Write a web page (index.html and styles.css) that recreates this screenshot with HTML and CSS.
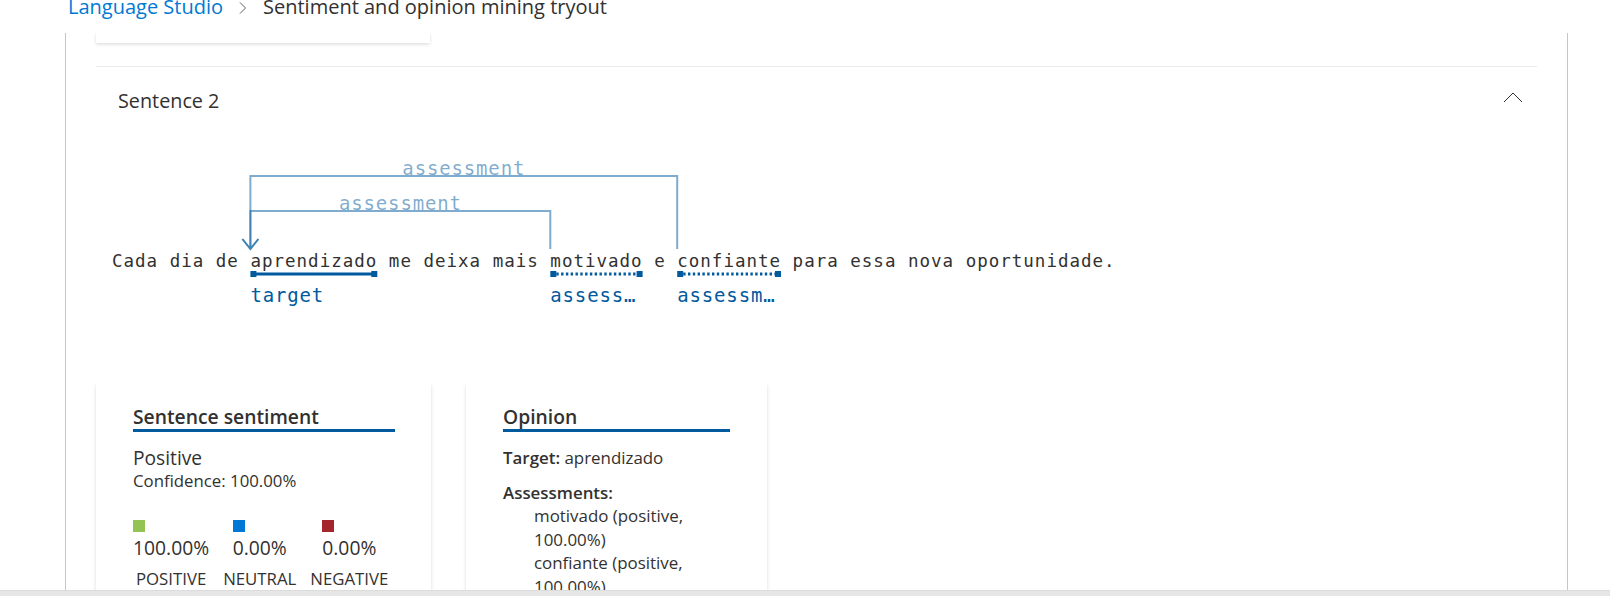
FILE: index.html
```html
<!DOCTYPE html>
<html lang="en">
<head>
<meta charset="utf-8">
<title>Sentiment and opinion mining tryout</title>
<link rel="stylesheet" href="styles.css">
</head>
<body>
<header class="breadcrumb">
  <a class="crumb-link" href="#">Language Studio</a>
  <svg class="crumb-sep" width="8" height="12" viewBox="0 0 8 12" aria-hidden="true"><path d="M1 0.5 L6.5 6 L1 11.5" fill="none" stroke="#605e5c" stroke-width="1"/></svg>
  <span class="crumb-current">Sentiment and opinion mining tryout</span>
</header>

<main class="workspace">
  <div class="card card-stub"></div>

  <section class="sentence-section">
    <div class="section-header">
      <span class="section-title">Sentence 2</span>
      <svg class="collapse-icon" width="20" height="11" viewBox="0 0 20 11" aria-hidden="true"><path d="M1 10 L10 1 L19 10" fill="none" stroke="#323130" stroke-width="1"/></svg>
    </div>

    <div class="diagram">
      <svg class="diagram-overlay" width="800" height="249" viewBox="0 0 800 249" aria-hidden="true">
        <g fill="none" stroke="rgba(0,90,158,0.5)" stroke-width="2">
          <path d="M581.2 115 V42 H154.4 V115 M146.4 105 L154.4 115 L162.4 105"/>
          <path d="M454.3 115 V77 H154.4 V115 M146.4 105 L154.4 115 L162.4 105"/>
        </g>
        <g class="rel-label" fill="rgba(0,90,158,0.5)" text-anchor="middle">
          <text x="367.8" y="41">assessment</text>
          <text x="304.4" y="76">assessment</text>
        </g>
        <g fill="#005a9e">
          <rect x="154.4" y="137" width="6" height="6"/>
          <rect x="275.3" y="137" width="6" height="6"/>
          <rect x="454.3" y="137" width="6" height="6"/>
          <rect x="540.6" y="137" width="6" height="6"/>
          <rect x="581.2" y="137" width="6" height="6"/>
          <rect x="679" y="137" width="6" height="6"/>
        </g>
        <g stroke="#005a9e" stroke-width="3" fill="none">
          <line x1="158" y1="140" x2="278" y2="140"/>
          <line x1="460.3" y1="140" x2="540.6" y2="140" stroke-dasharray="2.4 2.4"/>
          <line x1="587.2" y1="140" x2="679" y2="140" stroke-dasharray="2.4 2.4"/>
        </g>
        <g class="entity-label" fill="#005a9e">
          <text x="154.4" y="167.7">target</text>
          <text x="454.3" y="167.7">assess…</text>
          <text x="581.2" y="167.7">assessm…</text>
        </g>
      </svg>
      <p class="sentence">Cada dia de aprendizado me deixa mais motivado e confiante para essa nova oportunidade.</p>
    </div>

    <div class="result-cards">
      <div class="card card-sentiment">
        <h3 class="card-title">Sentence sentiment</h3>
        <div class="sentiment-label">Positive</div>
        <div class="confidence">Confidence: 100.00%</div>
        <div class="scores">
          <div class="score">
            <div class="score-value"><span class="swatch swatch-positive"></span><span class="pct">100.00%</span></div>
            <div class="score-name">POSITIVE</div>
          </div>
          <div class="score">
            <div class="score-value"><span class="swatch swatch-neutral"></span><span class="pct">0.00%</span></div>
            <div class="score-name">NEUTRAL</div>
          </div>
          <div class="score">
            <div class="score-value"><span class="swatch swatch-negative"></span><span class="pct">0.00%</span></div>
            <div class="score-name">NEGATIVE</div>
          </div>
        </div>
      </div>

      <div class="card card-opinion">
        <h3 class="card-title">Opinion</h3>
        <div class="opinion-target"><b>Target:</b> aprendizado</div>
        <div class="assess-title">Assessments:</div>
        <ul class="assess-list">
          <li>motivado (positive, 100.00%)</li>
          <li>confiante (positive, 100.00%)</li>
        </ul>
      </div>
    </div>
  </section>
</main>
<div class="scroll-track"></div>
</body>
</html>
```

FILE: styles.css
```css
html, body {
  margin: 0;
  padding: 0;
  background: #ffffff;
  height: 596px;
  overflow: hidden;
}

body {
  font-family: "Open Sans", "Noto Sans", sans-serif;
  color: #323130;
}

.breadcrumb {
  height: 33px;
  overflow: hidden;
  display: flex;
  align-items: flex-start;
  padding-left: 68px;
  gap: 16px;
  background: #ffffff;
}

.crumb-link,
.crumb-current {
  font-size: 20px;
  line-height: 27px;
  margin-top: -7px;
  white-space: nowrap;
}

.crumb-link {
  color: #0078d4;
  text-decoration: none;
}

.crumb-current {
  color: #323130;
}

.crumb-sep {
  margin-top: 2px;
  flex: none;
}

.workspace {
  margin-left: 65px;
  width: 1441px;
  height: 563px;
  padding: 0 30px;
  border-left: 1px solid #c8c6c4;
  border-right: 1px solid #c8c6c4;
  box-sizing: content-box;
  overflow: hidden;
}

.card {
  background: #ffffff;
  box-shadow: 0 1.6px 3.6px rgba(0, 0, 0, 0.132), 0 0.3px 0.9px rgba(0, 0, 0, 0.108);
  box-sizing: border-box;
}

.card-stub {
  width: 334px;
  height: 10px;
}

.sentence-section {
  margin-top: 23px;
  border-top: 1px solid #edebe9;
}

.section-header {
  height: 67px;
  display: flex;
  align-items: center;
  justify-content: space-between;
  padding: 0 14px 0 22px;
}

.section-title {
  font-size: 19.8px;
  line-height: 26px;
}

.collapse-icon {
  display: block;
  margin-top: -6px;
}

.diagram {
  position: relative;
  padding: 115px 0 110px 16px;
}

.diagram-overlay {
  position: absolute;
  left: 0;
  top: 0;
  overflow: visible;
}

.rel-label text,
.entity-label text {
  font-family: "DejaVu Sans Mono", monospace;
  font-size: 19px;
  letter-spacing: 0.85px;
}

.sentence {
  margin: 0;
  font-family: "DejaVu Sans Mono", monospace;
  font-size: 17.5px;
  letter-spacing: 1px;
  line-height: 24px;
  color: #323130;
  white-space: nowrap;
}

.result-cards {
  display: flex;
  gap: 35px;
  align-items: flex-start;
}

.card-sentiment {
  width: 335px;
  padding: 22px 36px 20px 37px;
}

.card-opinion {
  width: 301px;
  padding: 22px 37px 20px 37px;
}

.card-title {
  margin: 0;
  font-size: 19.3px;
  font-weight: 600;
  line-height: 24px;
  padding-bottom: 0;
  border-bottom: 3px solid #005a9e;
  color: #323130;
}

.sentiment-label {
  margin-top: 14px;
  font-size: 19.2px;
  line-height: 24px;
}

.confidence {
  margin-top: 1px;
  font-size: 16.8px;
  line-height: 20px;
}

.scores {
  display: flex;
  gap: 14px;
  margin-top: 29px;
}

.score {
  display: flex;
  flex-direction: column;
  align-items: center;
}

.score-value {
  display: flex;
  flex-direction: column;
  align-items: flex-start;
}

.swatch {
  width: 12px;
  height: 12px;
  display: block;
}

.swatch-positive { background: #92c353; }
.swatch-neutral { background: #0078d4; }
.swatch-negative { background: #a4262c; }

.pct {
  margin-top: 4px;
  font-size: 19.3px;
  line-height: 24px;
}

.score-name {
  margin-top: 8px;
  font-size: 16.8px;
  line-height: 22px;
}

.opinion-target {
  margin-top: 14px;
  font-size: 16.9px;
  line-height: 23px;
}

.opinion-target b,
.assess-title {
  font-weight: 600;
}

.assess-title {
  margin-top: 12px;
  font-size: 16.9px;
  line-height: 23px;
}

.assess-list {
  list-style: none;
  margin: 0;
  padding: 0 0 0 31px;
  font-size: 16.9px;
  line-height: 23.6px;
}

.scroll-track {
  position: fixed;
  left: 0;
  right: 0;
  bottom: 0;
  height: 5px;
  background: #e6e6e6;
  border-top: 1px solid #dcdcdc;
}
```
